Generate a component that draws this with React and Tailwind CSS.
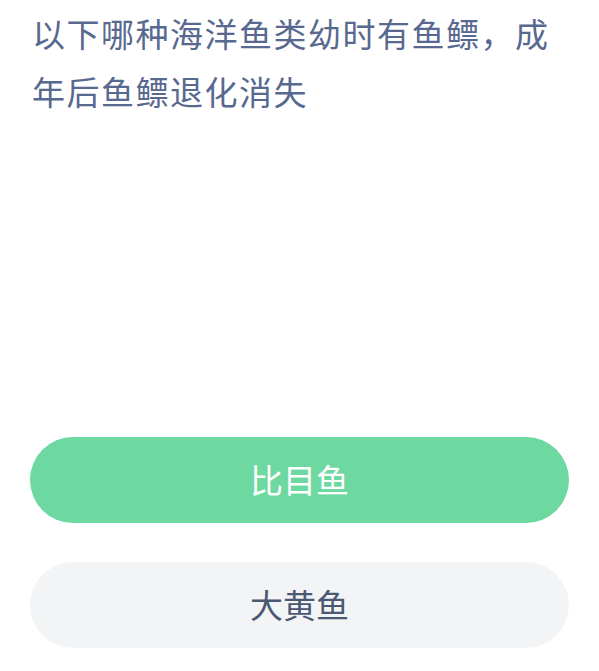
export default function App() {
  const font = { fontFamily: '"Noto Sans CJK SC", "Noto Sans", sans-serif' };
  return (
    <div className="w-[599px] h-[671px] bg-white overflow-hidden" style={font}>
      <div className="px-[32px] pt-[4px] text-[33px] leading-[58px] text-[#58698f] tracking-[1.5px]">
        以下哪种海洋鱼类幼时有鱼鳔，成年后鱼鳔退化消失
      </div>
      <div className="px-[30px] mt-[317px] flex flex-col gap-[39px]">
        <button className="h-[86px] w-full rounded-full bg-[#6dd89f] text-white text-[33px]">
          比目鱼
        </button>
        <button className="h-[86px] w-full rounded-full bg-[#f3f4f6] text-[#4b5872] text-[33px]">
          大黄鱼
        </button>
      </div>
    </div>
  );
}
